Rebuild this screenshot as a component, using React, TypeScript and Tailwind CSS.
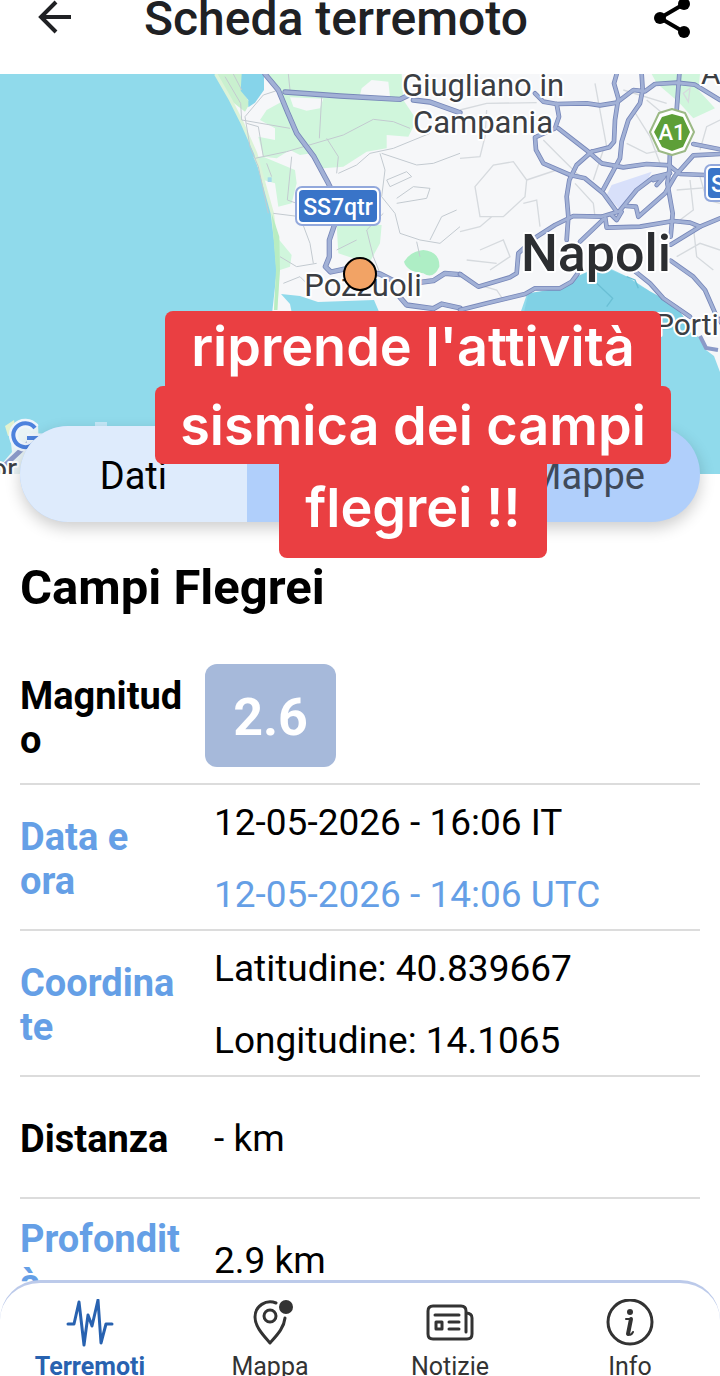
import type { ReactNode } from 'react';

interface Row {
  label: string;
  accent?: boolean;
  values: { text: string; accent?: boolean }[];
}

const rows: Row[] = [
  {
    label: 'Data e ora',
    accent: true,
    values: [{ text: '12-05-2026 - 16:06 IT' }, { text: '12-05-2026 - 14:06 UTC', accent: true }],
  },
  {
    label: 'Coordinate',
    accent: true,
    values: [{ text: 'Latitudine: 40.839667' }, { text: 'Longitudine: 14.1065' }],
  },
  { label: 'Distanza', values: [{ text: '- km' }] },
  { label: 'Profondità', accent: true, values: [{ text: '2.9 km' }] },
];

const westRoads = [
  'M195 12 L235 60 L262 125 L290 190 L342 260 L385 340 L405 380',
  'M255 66 L420 78 L600 88 L625 76',
  'M640 90 L690 96 L780 128',
  'M405 460 L388 510 L388 560 L376 590 L392 606 L440 596 L540 612 L580 632',
  'M660 637 L700 632 L735 610 L780 614',
  'M600 682 L620 705 L700 716 L725 702 L780 714',
];

const eastRoads = [
  'M225 70 L250 95 L290 102 L380 100 L420 106 L470 98 L520 60 L555 64 L585 42 L650 38 L705 44 L780 90',
  'M470 12 L462 40 L475 85 L465 150 L462 215 L448 232 L395 245',
  'M545 12 L548 60 L540 100 L505 150 L485 215 L480 265 L430 358',
  'M290 102 L297 140 L285 175 L225 202 L228 240 L250 280 L330 315 L375 325 L430 370 L470 425',
  'M295 175 L385 245 L425 280 L490 292 L560 282 L630 286',
  'M395 245 L350 285 L328 330 L320 380 L325 440 L320 510',
  'M658 12 L650 120',
  'M0 612 L55 650 L150 622 L170 610 L175 550 L230 500 L285 465 L340 438 L425 440 L478 424 L530 360 L580 322 L630 310',
  'M430 448 L360 515',
  'M630 245 L628 300 L622 340 L638 430 L632 500',
  'M436 445 L440 473 L540 470 L640 453 L690 458 L720 470 L780 445',
  'M720 470 L632 524',
  'M632 290 L660 312 L735 315',
  'M780 238 L700 222',
  'M780 252 L700 256 L645 318 L615 370 L535 440 L528 410 L498 408',
  'M590 345 L612 320 L580 330',
  'M455 435 L470 450 L485 425',
  'M0 720 L80 700 L195 672 L225 655 L300 655 L335 635 L352 612',
  'M520 600 L570 640 L610 685 L690 740',
  'M632 572 L700 620 L735 660 L770 740 L800 780',
];

const westLanes =
  'M100 12 L125 60 M265 12 L270 60 M365 82 L358 205 M230 62 L190 75 L135 140 L150 230 L175 290 L205 430 M75 20 L122 100 L125 150 L270 175 M165 265 L260 245 L430 195 L520 148 L580 155 L630 175 M380 205 L415 260 L410 310 M415 310 L470 285 L510 250 L580 235 L690 190 M140 160 L175 170 L190 260 M275 260 L262 390 L290 400 M540 250 L555 300 L545 380 L585 430 L600 490 L660 510 L720 520 L780 470 M560 330 L620 305 L635 320 L570 350 Z M590 385 L640 350 L690 355 L680 385 L590 400 M690 510 L725 440 L770 420 M550 430 L500 480 L520 560 L540 610 M220 430 L300 440 L330 520 L340 580 M240 560 L290 590 L350 580 M545 250 L650 285 L700 280 L780 250 M410 540 L470 510 M650 515 L660 560 M200 280 L215 320 M250 640 L300 620 L330 650';

const eastLanes =
  'M0 120 L80 100 L230 98 M80 120 L75 200 L60 260 L0 265 M45 350 L100 285 L160 275 L200 330 L195 380 L130 440 L60 440 Z M250 210 L300 260 L350 310 L415 360 M405 40 L440 230 M200 330 L290 300 M190 400 L230 390 L240 470 M0 485 L60 470 L95 440 M60 540 L130 510 L150 560 L90 600 M20 570 L110 580 M490 60 L620 100 M520 120 L570 200 L600 280 M560 90 L620 140 M500 220 L560 250 L610 240 M400 330 L430 240 M650 360 L780 350 M690 330 L700 420 L660 450 M720 320 L740 390 L780 400 M650 560 L720 520 L780 540 M700 470 L710 560 L760 600 M40 640 L110 660 L130 690 M345 340 L400 400 L405 440 M670 70 L690 55 L685 95 Z M720 240 L740 170 L780 150';

function MapView() {
  return (
    <svg
      className="block h-[400px] w-full"
      viewBox="0 0 720 400"
      preserveAspectRatio="xMidYMid slice"
      role="img"
      aria-label="Napoli, Pozzuoli"
    >
      <rect width="720" height="400" fill="#90daeb" />
      {/* mainland */}
      <path
        d="M215 0 L230 26 L242 49 L255 79 L263 109 L272 139 L275 169 L277 196 L275 213 L272 240 L292 240 L290 230 L281 220 L300 222 L318 228 L374 226 L380 240 L520 240 L527 220 L558 215 L577 203 L607 193 L628 203 L648 216 L662 234 L680 252 L698 262 L706 276 L714 282 L720 298 V0 Z"
        fill="#f6f7f9"
      />
      <g transform="translate(200 -4) scale(0.33333)">
        <path d="M205 12 H605 L610 90 L650 150 L625 200 L560 195 L560 235 L500 245 L430 290 L370 295 L340 250 L290 190 L255 100 Z" fill="#d0f6dc" />
        <path d="M200 120 L255 90 L290 190 L335 250 L300 255 L270 240 L230 265 L190 260 L175 200 L225 210 L225 175 L180 150 Z" fill="#d0f6dc" />
        <path d="M160 260 L190 260 L285 300 L290 340 L275 400 L235 410 L225 340 L190 330 Z M410 465 H545 L540 520 L510 575 L460 565 L415 550 Z M230 500 L275 555 L270 590 L240 600 Z" fill="#d0f6dc" />
        <path d="M480 75 L485 55 L515 30 L565 35 L570 80 Z M270 82 L370 86 L360 115 L320 122 L280 110 Z" fill="#f6f7f9" />
        <path d="M45 12 H130 L125 60 L150 100 L135 125 L90 90 Z" fill="#c9f0cf" />
        <path d="M47 12 L92 90 L127 160 L167 250 L192 340 L217 430 L228 520 L234 600 L227 720" fill="none" stroke="#dcf3d8" strokeWidth="10" />
        <path d="M215 430 L238 500 L240 600 L232 720 L222 720 L228 600 Z" fill="#b8edc2" />
        <path d="M125 12 H192 L192 60 L165 98 L145 112 L145 90 L122 62 Z" fill="#86d4ea" />
        <path d="M612 575 Q630 545 670 540 Q720 545 718 590 Q700 630 670 610 Q620 605 612 575 Z" fill="#aeeec5" />
        <path d="M203 322 h12 v14 h-12 Z" fill="#a5d9ea" />
        <path d={westLanes} fill="none" stroke="#c3cad0" strokeWidth="3" />
      </g>
      <g transform="translate(460 -4) scale(0.33333)">
        <path d="M575 12 H720 L715 60 L765 115 L700 145 L655 95 L590 40 Z" fill="#d0f6dc" />
        <path d="M455 345 L575 305 L560 335 L520 370 L480 420 L440 375 Z" fill="#d8e0fa" />
        <path d="M345 622 L395 600 L440 595 L500 620 L545 650 L600 680 L660 725 L700 780 H180 L205 670 L300 655 Z" fill="#80d1e5" />
        <path d="M410 640 L458 685 L440 710 M500 620 L525 630 L535 655" fill="none" stroke="#69bfd4" strokeWidth="4" />
        <path d={eastLanes} fill="none" stroke="#d6dade" strokeWidth="4" />
      </g>
      <g transform="translate(200 -4) scale(0.33333)" fill="none" strokeLinejoin="round" strokeLinecap="round">
        {westRoads.map((d) => (
          <path key={d} d={d} stroke="#7787b9" strokeWidth="16" />
        ))}
        {westRoads.map((d) => (
          <path key={d} d={d} stroke="#a2b1d6" strokeWidth="11" />
        ))}
      </g>
      <g transform="translate(460 -4) scale(0.33333)" fill="none" strokeLinejoin="round" strokeLinecap="round">
        {eastRoads.map((d) => (
          <path key={d} d={d} stroke="#7787b9" strokeWidth="14" />
        ))}
        {eastRoads.map((d) => (
          <path key={d} d={d} stroke="#a2b1d6" strokeWidth="9" />
        ))}
      </g>
      <path d="M700 262 L706 274 L718 276" fill="none" stroke="#8b9ac8" strokeWidth="4" />

      {/* island in the lower left corner */}
      <path d="M5 352 L14 346 L16 360 L8 362 Z" fill="#e3f2cf" />
      <path d="M0 400 V392 L12 378 L10 360 L20 346 L38 350 L40 400 Z" fill="#e8f3f5" />
      <path d="M2 394 L34 364" stroke="#8b9ac8" strokeWidth="5" />
      <path d="M95 348 H107 V356 H95 Z" fill="#c5e8f8" />
      <path d="M35 354 A12 12 0 1 0 37 364 H27" fill="none" stroke="#eef5fc" strokeWidth="9" />
      <path d="M35 354 A12 12 0 1 0 37 364 H27" fill="none" stroke="#4d82dd" strokeWidth="4" />

      <g
        fontFamily="Roboto, sans-serif"
        fill="#3b3e43"
        stroke="#fff"
        strokeWidth="4"
        strokeLinejoin="round"
        paintOrder="stroke"
        textAnchor="middle"
      >
        <text x="483" y="22" fontSize="31">Giugliano in</text>
        <text x="483" y="59" fontSize="31">Campania</text>
        <text x="363" y="222" fontSize="31">Pozzuoli</text>
        <text x="596" y="197" fontSize="52" fontWeight="500" fill="#2c2e31">Napoli</text>
        <text x="655" y="261" fontSize="30" textAnchor="start">Porti</text>
        <text x="701" y="10" fontSize="30" textAnchor="start">A</text>
        <text x="-10" y="405" fontSize="30" textAnchor="start">or</text>
      </g>

      {/* road signs */}
      <g fontFamily="Roboto, sans-serif" fill="#fff" fontWeight="500" textAnchor="middle">
        <rect x="296" y="113" width="84" height="38" rx="6" fill="#fff" stroke="#92a8dc" strokeWidth="2" />
        <rect x="299" y="116" width="78" height="32" rx="4" fill="#3974c8" />
        <text x="338" y="141" fontSize="23">SS7qtr</text>
        <path d="M659 39 L672 35 L685 39 L694 58 L685 77 L672 81 L659 77 L650 58 Z" fill="#fff" stroke="#9bb985" strokeWidth="2" strokeLinejoin="round" />
        <path d="M662 43 L672 40 L683 43 L690 58 L683 73 L672 77 L662 73 L654 58 Z" fill="#5d9f38" />
        <text x="672" y="66" fontSize="22">A1</text>
        <rect x="705" y="91" width="50" height="36" rx="6" fill="#fff" stroke="#92a8dc" strokeWidth="2" />
        <rect x="708" y="94" width="44" height="30" rx="4" fill="#3974c8" />
        <text x="711" y="118" fontSize="23" textAnchor="start">S</text>
      </g>

      {/* epicentre */}
      <circle cx="360" cy="200" r="16" fill="#f2a365" stroke="#000" strokeWidth="2" />
    </svg>
  );
}

interface NavItemProps {
  label: string;
  active?: boolean;
  children: ReactNode;
}

function NavItem({ label, active, children }: NavItemProps) {
  return (
    <a
      href="#"
      aria-current={active ? 'page' : undefined}
      className={
        active
          ? 'flex flex-1 flex-col items-center gap-1 text-[25px] leading-8 font-bold text-[#2862b0]'
          : 'flex flex-1 flex-col items-center gap-1 text-[25px] leading-8 text-[#333333]'
      }
    >
      <svg className="h-12 w-12 shrink-0" viewBox="0 0 48 48" fill="none" stroke="currentColor" strokeLinecap="round" strokeLinejoin="round" aria-hidden="true">
        {children}
      </svg>
      <span>{label}</span>
    </a>
  );
}

export default function App() {
  return (
    <div className="relative flex h-screen flex-col overflow-hidden bg-white font-['Roboto',sans-serif] text-black">
      <header className="flex h-[74px] shrink-0 items-center px-7 pb-9 text-[#202124]">
        <button type="button" aria-label="Indietro" className="mr-15">
          <svg className="h-14 w-14" viewBox="0 0 56 56" fill="none" stroke="currentColor" strokeWidth="4" aria-hidden="true">
            <path d="M43 26 H13 M28 11 L13 26 L28 41" />
          </svg>
        </button>
        <h1 className="flex-1 text-[48px] leading-[56px] font-medium">Scheda terremoto</h1>
        <button type="button" aria-label="Condividi" className="text-black">
          <svg className="h-12 w-12" viewBox="0 0 48 48" fill="none" stroke="currentColor" strokeWidth="4" aria-hidden="true">
            <path d="M40 9 L16 23 L40 37" />
            <circle cx="40" cy="9" r="6" fill="currentColor" stroke="none" />
            <circle cx="16" cy="23" r="6" fill="currentColor" stroke="none" />
            <circle cx="40" cy="37" r="6" fill="currentColor" stroke="none" />
          </svg>
        </button>
      </header>

      <main className="min-h-0 flex-1 overflow-hidden">
        <MapView />
        <div className="relative mx-5 -mt-12 flex h-24 overflow-hidden rounded-full bg-[#b0cffb] text-[38px] text-[#3f4a5a] shadow-[0_6px_16px_rgba(0,0,0,0.2)]">
          <button type="button" className="flex-1 bg-[#deebfc] pt-1 text-black">
            Dati
          </button>
          <div className="flex-1" />
          <button type="button" className="flex-1 pt-1">
            Mappe
          </button>
        </div>

        <section className="px-5 pt-9">
          <h2 className="text-[49px] leading-[60px] font-bold">Campi Flegrei</h2>
          <table className="mt-[38px] w-full table-fixed text-[38px]">
            <tbody>
              <tr className="border-b-2 border-[#dcdcdc]">
                <th scope="row" className="w-[164px] pt-3 pb-4 text-left align-middle leading-[44px] font-bold wrap-break-word">
                  Magnitudo
                </th>
                <td className="pt-2 pb-4 pl-[21px]">
                  <span className="inline-flex h-[103px] w-[131px] items-center justify-center rounded-xl bg-[#a6b9da] pt-1 align-middle text-[52px] font-bold text-white">
                    2.6
                  </span>
                </td>
              </tr>
              {rows.map((row) => (
                <tr key={row.label} className="h-[122px] border-b-2 border-[#dcdcdc]">
                  <th
                    scope="row"
                    className={
                      row.accent
                        ? 'pt-1 text-left align-middle leading-[44px] font-bold wrap-break-word text-[#659fe6]'
                        : 'pt-1 text-left align-middle leading-[44px] font-bold wrap-break-word'
                    }
                  >
                    {row.label}
                  </th>
                  <td className="pl-[30px] text-[37px] leading-[68px]">
                    {row.values.map((value) => (
                      <p key={value.text} className={value.accent ? 'pt-1 text-[#659fe6]' : 'pt-1'}>
                        {value.text}
                      </p>
                    ))}
                  </td>
                </tr>
              ))}
            </tbody>
          </table>
        </section>
      </main>

      <nav className="absolute inset-x-0 bottom-0 flex h-24 overflow-hidden rounded-t-[40px] border-t-3 border-[#bccaea] bg-white pt-4">
        <NavItem label="Terremoti" active>
          <path
            strokeWidth="3"
            d="M2 25 H8 L13 3 L18 46 L22 16 L26 27 L32 1 L35 44 L40 25 H46"
          />
        </NavItem>
        <NavItem label="Mappa">
          <path strokeWidth="3" d="M30 4 C20 0 9 7 9 18 C9 28 18 37 24 44 C31 36 38 29 39 19" />
          <circle cx="24" cy="17" r="6" strokeWidth="3" />
          <circle cx="40" cy="8" r="7" fill="currentColor" stroke="none" />
        </NavItem>
        <NavItem label="Notizie">
          <path
            strokeWidth="3"
            d="M40 33 V12 Q40 7 35 7 H7 Q2 7 2 12 V35 Q2 40 7 40 H41 Q46 40 46 35 V19 Q46 14 40 14"
          />
          <path strokeWidth="3" d="M9 16 H33 M23 23 H33 M23 30 H33" />
          <path strokeWidth="3" d="M10 23 H16 V30 H10 Z" />
        </NavItem>
        <NavItem label="Info">
          <circle cx="24" cy="23" r="22" strokeWidth="3" />
          <circle cx="24" cy="13" r="3" fill="currentColor" stroke="none" />
          <path strokeWidth="4" d="M25 20 L22 35" />
          <path strokeWidth="2" d="M20 20 H25 M22 35 Q25 37 27 33" />
        </NavItem>
      </nav>

      <p className="absolute top-[311px] left-[155px] flex w-[516px] flex-col items-center text-[54px] font-semibold text-white font-['Inter',sans-serif]">
        <span className="flex h-[75px] w-[496px] items-center justify-center rounded-t-lg bg-[#ea3f42] pb-1">riprende l'attività</span>
        <span className="flex h-[78px] w-full items-center justify-center rounded-lg bg-[#ea3f42]">sismica dei campi</span>
        <span className="flex h-[94px] w-[268px] items-center justify-center rounded-b-lg bg-[#ea3f42] pb-2">flegrei !!</span>
      </p>
    </div>
  );
}
